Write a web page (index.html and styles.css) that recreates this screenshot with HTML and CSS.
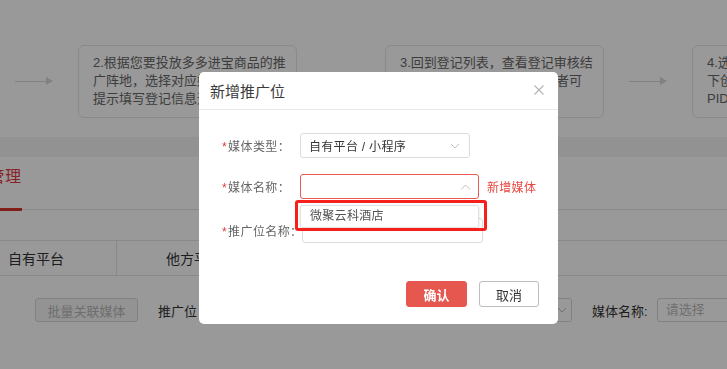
FILE: index.html
```html
<!DOCTYPE html>
<html lang="zh-CN">
<head>
<meta charset="utf-8">
<title>新增推广位</title>
<link rel="stylesheet" href="styles.css">
</head>
<body>
<div class="page">
  <div class="steps">
    <div class="step-box">1.注册多多进宝推手账号，完成实名认证</div>
    <div class="step-arrow"><span class="arrow-line"></span></div>
    <div class="step-box">2.根据您要投放多多进宝商品的推广阵地，选择对应媒体类型，按提示填写登记信息进行登记</div>
    <div class="step-arrow"><span class="arrow-line"></span></div>
    <div class="step-box">3.回到登记列表，查看登记审核结果，审核通过后媒体的所有者可使用</div>
    <div class="step-arrow"><span class="arrow-line"></span></div>
    <div class="step-box">4.选择审核通过的媒体，在该媒体下创建推广位，即可获取推广位PID进行推广</div>
  </div>
  <div class="band"></div>
  <div class="tabs">
    <div class="tab tab-active">推广位管理</div>
  </div>
  <div class="type-row">
    <div class="type-cell type-first">自有平台</div>
    <div class="type-cell type-second">他方平台</div>
  </div>
  <div class="toolbar">
    <button class="btn-disabled">批量关联媒体</button>
    <span class="tool-label">推广位</span>
    <div class="tool-select">
      <svg class="chev" width="10" height="6" viewBox="0 0 10 6"><path d="M1 1 L5 5 L9 1" fill="none" stroke="#bbb" stroke-width="1"/></svg>
    </div>
    <span class="tool-label tool-label-media">媒体名称:</span>
    <div class="tool-input">请选择</div>
  </div>
</div>

<div class="mask"></div>

<div class="modal">
  <div class="modal-header">
    <span class="modal-title">新增推广位</span>
    <svg class="modal-close" width="10" height="10" viewBox="0 0 10 10"><path d="M0.5 0.5 L9.5 9.5 M9.5 0.5 L0.5 9.5" stroke="#b4b4b4" stroke-width="1.1" fill="none"/></svg>
  </div>
  <div class="modal-body">
    <div class="form-row row-type">
      <label class="form-label"><i class="req">*</i>媒体类型：</label>
      <div class="select select-type">
        <span class="select-text">自有平台 / 小程序</span>
        <svg width="10" height="6" viewBox="0 0 10 6"><path d="M1 1 L5 5 L9 1" fill="none" stroke="#c0c0c0" stroke-width="1"/></svg>
      </div>
    </div>
    <div class="form-row row-media">
      <label class="form-label"><i class="req">*</i>媒体名称：</label>
      <div class="select select-media">
        <span class="select-text"></span>
        <svg width="11" height="6" viewBox="0 0 11 6"><path d="M1 5.5 L5.5 1 L10 5.5" fill="none" stroke="#c0c0c0" stroke-width="1"/></svg>
      </div>
      <span class="add-link">新增媒体</span>
      <div class="dropdown">
        <div class="dropdown-item">微聚云科酒店</div>
      </div>
      <div class="highlight"></div>
    </div>
    <div class="form-row row-name">
      <label class="form-label"><i class="req">*</i>推广位名称：</label>
      <div class="text-input"></div>
    </div>
  </div>
  <div class="modal-footer">
    <button class="btn btn-primary">确认</button>
    <button class="btn btn-default">取消</button>
  </div>
</div>
</body>
</html>
```

FILE: styles.css
```css
* { box-sizing: border-box; }

html, body {
  margin: 0;
  padding: 0;
  width: 727px;
  height: 369px;
  overflow: hidden;
  background: #ffffff;
  font-family: "Liberation Sans", "Noto Sans CJK SC", sans-serif;
}

.page {
  width: 727px;
  height: 369px;
  overflow: hidden;
}

/* steps */
.steps {
  display: flex;
  align-items: flex-start;
  margin-left: -229px;
  padding-top: 45px;
  width: 1300px;
}

.step-box {
  flex: 0 0 219px;
  height: 73px;
  border: 1px solid #e6e6e6;
  border-radius: 6px;
  padding: 8px 9px 0 14px;
  font-size: 13px;
  line-height: 18px;
  color: #666;
  overflow: hidden;
}

.step-arrow {
  flex: 0 0 88px;
  height: 73px;
  display: flex;
  align-items: center;
  padding: 0 26px 0 25px;
}

.arrow-line {
  position: relative;
  display: block;
  width: 37px;
  height: 1px;
  background: #d8d8d8;
}

.arrow-line::after {
  content: "";
  position: absolute;
  right: -1px;
  top: -4px;
  border-left: 7px solid #d8d8d8;
  border-top: 4.5px solid transparent;
  border-bottom: 4.5px solid transparent;
}

.band {
  margin-top: 19px;
  height: 20px;
  background: #f3f3f3;
}

.tabs {
  height: 53px;
  border-bottom: 1px solid #e4e4e4;
  display: flex;
  align-items: flex-end;
}

.tab {
  font-size: 16px;
  line-height: 20px;
  color: #e4393c;
  margin-left: -61px;
  padding-bottom: 21px;
  border-bottom: 3px solid #d5322e;
  margin-bottom: -2px;
  letter-spacing: 0.5px;
  white-space: nowrap;
}

.type-row {
  margin-top: 30px;
  height: 36px;
  border-top: 1px solid #e4e4e4;
  border-bottom: 1px solid #e4e4e4;
  display: flex;
  align-items: stretch;
}

.type-cell {
  font-size: 14px;
  color: #333;
  display: flex;
  align-items: center;
  white-space: nowrap;
}

.type-first {
  width: 117px;
  padding-left: 8px;
  border-right: 1px solid #e4e4e4;
}

.type-second {
  padding-left: 49px;
}

.toolbar {
  margin-top: 22px;
  height: 24px;
  width: 900px;
  display: flex;
  align-items: center;
  padding-left: 35px;
}

.toolbar > * { flex-shrink: 0; }

.btn-disabled {
  width: 103px;
  height: 24px;
  border: 1px solid #d8d8d8;
  border-radius: 3px;
  background: #f5f5f5;
  color: #b8b8b8;
  font-family: inherit;
  font-size: 13px;
  padding: 0;
}

.tool-label {
  font-size: 13px;
  color: #333;
  margin-left: 20px;
  white-space: nowrap;
}

.tool-select {
  margin-left: 8px;
  width: 367px;
  height: 24px;
  border: 1px solid #d8d8d8;
  border-radius: 3px;
  display: flex;
  align-items: center;
  justify-content: flex-end;
  padding-right: 4px;
}

.tool-label-media {
  margin-left: 20px;
}

.tool-input {
  margin-left: 9px;
  width: 120px;
  height: 24px;
  border: 1px solid #d8d8d8;
  border-radius: 3px;
  font-size: 13px;
  color: #bbb;
  padding-left: 8px;
  line-height: 22px;
}

/* mask */
.mask {
  position: fixed;
  left: 0;
  top: 0;
  width: 727px;
  height: 369px;
  background: rgba(0, 0, 0, 0.4);
}

/* modal */
.modal {
  position: fixed;
  left: 199px;
  top: 72px;
  width: 359px;
  height: 252px;
  background: #fff;
  border-radius: 5px;
  display: flex;
  flex-direction: column;
}

.modal-header {
  height: 38px;
  border-bottom: 1px solid #e8e8e8;
  display: flex;
  align-items: center;
  justify-content: space-between;
  padding: 0 14px 1px 11px;
}

.modal-title {
  font-size: 15px;
  color: #3a3a3a;
}

.modal-body {
  padding-top: 23px;
}

.form-row {
  position: relative;
  display: flex;
  align-items: center;
  height: 25px;
}

.row-media { margin-top: 16px; }
.row-name { margin-top: 19px; }

.form-label {
  flex: 0 0 101px;
  width: 101px;
  padding-left: 23px;
  font-size: 12px;
  color: #666;
  white-space: nowrap;
  letter-spacing: 0.4px;
}

.req {
  font-style: normal;
  color: #e4393c;
  margin-right: 1px;
}

.select {
  height: 25px;
  border: 1px solid #dcdcdc;
  border-radius: 3px;
  display: flex;
  align-items: center;
  justify-content: space-between;
  padding: 0 9px 0 8px;
}

.select-type { width: 170px; }

.select-media {
  width: 179px;
  border-color: #e95a52;
  padding-right: 7px;
}

.select-text {
  font-size: 12px;
  color: #333;
  letter-spacing: 0.3px;
}

.add-link {
  margin-left: 8px;
  font-size: 12px;
  color: #e8473f;
  letter-spacing: 0.3px;
}

.dropdown {
  position: absolute;
  left: 101px;
  top: 31px;
  width: 179px;
  height: 23px;
  background: #fff;
  border: 1px solid #e2e2e2;
  border-radius: 2px;
  box-shadow: 0 1px 3px rgba(0, 0, 0, 0.12);
  z-index: 2;
}

.dropdown-item {
  font-size: 12px;
  line-height: 21px;
  color: #555;
  padding-left: 9px;
  letter-spacing: 0.3px;
}

.highlight {
  position: absolute;
  left: 96px;
  top: 26px;
  width: 192px;
  height: 31px;
  border: 3px solid #f5201c;
  border-radius: 3px;
  z-index: 3;
}

.row-name .form-label {
  flex: 0 0 103px;
  width: 103px;
}

.text-input {
  width: 181px;
  height: 25px;
  border: 1px solid #dcdcdc;
  border-radius: 3px;
}

.modal-footer {
  margin-top: auto;
  display: flex;
  justify-content: flex-end;
  gap: 12px;
  padding: 0 19px 17px 0;
}

.btn {
  height: 26px;
  border-radius: 3px;
  font-family: inherit;
  font-size: 13px;
  padding: 0;
}

.btn-primary {
  width: 61px;
  background: #e5574f;
  border: 1px solid #e5574f;
  color: #fff;
  font-weight: bold;
}

.btn-default {
  width: 60px;
  background: #fff;
  border: 1px solid #bdbdbd;
  color: #333;
}
```
